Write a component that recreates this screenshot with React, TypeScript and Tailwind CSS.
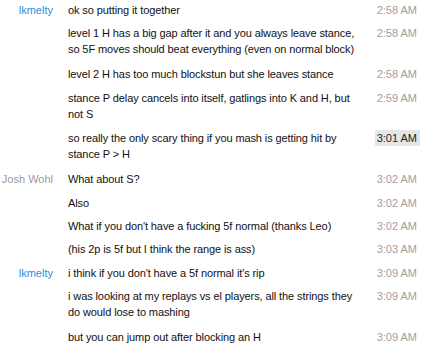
import React from 'react';

type Msg = {
  name?: string;
  self?: boolean;
  lines: string[];
  time: string;
  active?: boolean;
};

const messages: Msg[] = [
  { name: 'lkmelty', self: true, lines: ['ok so putting it together'], time: '2:58 AM' },
  {
    lines: [
      'level 1 H has a big gap after it and you always leave stance,',
      'so 5F moves should beat everything (even on normal block)'
    ],
    time: '2:58 AM'
  },
  { lines: ['level 2 H has too much blockstun but she leaves stance'], time: '2:58 AM' },
  { lines: ['stance P delay cancels into itself, gatlings into K and H, but', 'not S'], time: '2:59 AM' },
  {
    lines: ['so really the only scary thing if you mash is getting hit by', 'stance P > H'],
    time: '3:01 AM',
    active: true
  },
  { name: 'Josh Wohl', lines: ['What about S?'], time: '3:02 AM' },
  { lines: ['Also'], time: '3:02 AM' },
  { lines: ["What if you don't have a fucking 5f normal (thanks Leo)"], time: '3:02 AM' },
  { lines: ['(his 2p is 5f but I think the range is ass)'], time: '3:03 AM' },
  { name: 'lkmelty', self: true, lines: ["i think if you don't have a 5f normal it's rip"], time: '3:09 AM' },
  {
    lines: ['i was looking at my replays vs el players, all the strings they', 'do would lose to mashing'],
    time: '3:09 AM'
  },
  { lines: ['but you can jump out after blocking an H'], time: '3:09 AM' }
];

const App: React.FC = () => {
  return (
    <div
      className="w-[427px] h-[351px] overflow-hidden bg-white text-[11px] leading-[16px] text-black"
      style={{ fontFamily: '"Liberation Sans", Arial, sans-serif' }}
    >
      {messages.map((m, i) => (
        <div
          key={i}
          className={`flex items-start pt-[2px] ${m.lines.length > 1 ? 'pb-[6.8px]' : 'pb-[5.4px]'}`}
        >
          {/* 名前 */}
          <div
            className={`w-[53px] shrink-0 text-right ${m.self ? 'text-[#2e8ee0]' : 'text-[#9a9a9a]'}`}
          >
            {m.name ?? ''}
          </div>
          {/* 本文 */}
          <div className="ml-[15px] w-[300px] shrink-0 text-[#111] tracking-[-0.1px]">
            {m.lines.map((l, j) => (
              <div key={j} className="whitespace-nowrap">
                {l}
              </div>
            ))}
          </div>
          {/* 時刻 */}
          <div className="flex-1 flex justify-end pr-[10px]">
            <span
              className={
                m.active
                  ? 'inline-block bg-[#e6e6e6] text-[#222] pl-[2px] pr-[3px] -mr-[3px]'
                  : 'text-[#a0a0a0]'
              }
            >
              {m.time}
            </span>
          </div>
        </div>
      ))}
    </div>
  );
};

export default App;
